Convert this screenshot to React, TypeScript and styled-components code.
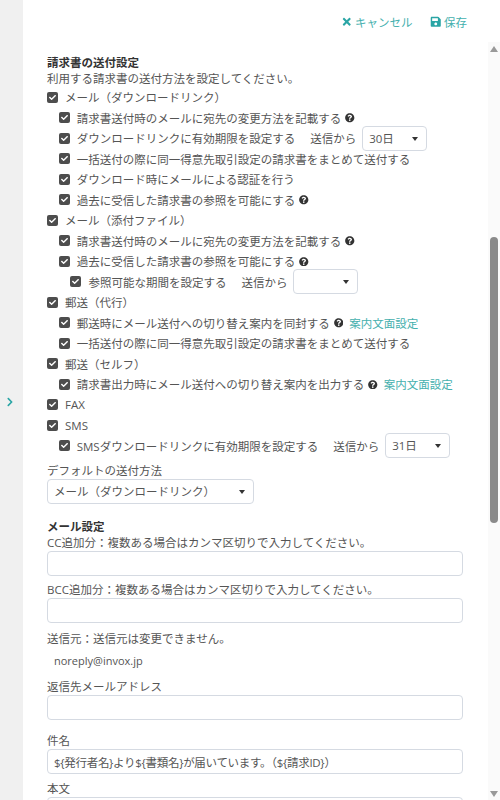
import React from 'react'
import styled, { createGlobalStyle } from 'styled-components'
import { FaCheck, FaChevronRight, FaQuestionCircle, FaSave, FaTimes } from 'react-icons/fa'

const GlobalStyle = createGlobalStyle`
    html, body {
        margin: 0;
        padding: 0;
        height: 800px;
        overflow: hidden;
        background: #fff;
    }
    * {
        box-sizing: border-box;
    }
    body, input, select, textarea {
        font-family: "Open Sans", "Noto Sans CJK JP", sans-serif;
        font-size: 11.5px;
        color: #555;
    }
`;

const Page = styled.div`
    display: flex;
    width: 500px;
    height: 800px;
    overflow: hidden;
`;

const SideBar = styled.div`
    flex: 0 0 23px;
    display: flex;
    align-items: center;
    justify-content: center;
    padding: 4px 3px 0 0;
    background-color: #f0f0f0;
    color: #2aa5a5;
    font-size: 10px;
`;

const Main = styled.div`
    flex: 1;
    min-width: 0;
    display: flex;
    flex-direction: column;
`;

const TopBar = styled.div`
    flex: 0 0 42px;
    display: flex;
    justify-content: flex-end;
    align-items: center;
    gap: 17px;
    padding: 2px 33px 0 0;
`;

const TopAction = styled.a<{ $gap: number }>`
    display: flex;
    align-items: center;
    gap: ${p => p.$gap}px;
    color: #45b0ae;
    font-size: 11.5px;
    svg {
        color: #2aa5a5;
    }
`;

const Body = styled.div`
    flex: 1;
    min-height: 0;
    display: flex;
`;

const Form = styled.div`
    flex: 1;
    min-width: 0;
    overflow: hidden;
    padding: 12px 25px 0 24px;
`;

const ScrollTrack = styled.div`
    flex: 0 0 12px;
    display: flex;
    flex-direction: column;
    align-items: center;
    background-color: #fafafa;
`;

const ScrollArrow = styled.div<{ $down?: boolean }>`
    flex: 0 0 6px;
    width: 0;
    margin-top: ${p => (p.$down ? 'auto' : '4px')};
    margin-bottom: ${p => (p.$down ? '3px' : '0')};
    border-left: 4.5px solid transparent;
    border-right: 4.5px solid transparent;
    border-bottom: ${p => (p.$down ? '0' : '6px solid #999')};
    border-top: ${p => (p.$down ? '6px solid #999' : '0')};
`;

const ScrollThumb = styled.div`
    flex: 0 0 286px;
    width: 8px;
    margin-top: 185px;
    border-radius: 4px;
    background-color: #8a8a8a;
`;

const Heading = styled.div<{ $top?: number }>`
    margin-top: ${p => p.$top || 0}px;
    font-weight: bold;
    color: #333;
    line-height: 17px;
`;

const Text = styled.div`
    line-height: 16px;
`;

const Row = styled.div<{ $level?: number }>`
    display: flex;
    align-items: center;
    height: 20.5px;
    margin-left: ${p => (p.$level || 0) * 11.7}px;
    white-space: nowrap;
`;

const Box = styled.span`
    flex: 0 0 11px;
    width: 11px;
    height: 11px;
    margin-right: 7px;
    display: flex;
    align-items: center;
    justify-content: center;
    border-radius: 2px;
    background-color: #4d4d4d;
    color: #fff;
    font-size: 7px;
`;

const Help = styled.span`
    display: inline-flex;
    margin-left: 4px;
    color: #333;
    font-size: 9.5px;
`;

const Link = styled.a`
    margin-left: 6px;
    color: #45b0ae;
`;

const After = styled.span`
    margin-left: 15px;
    margin-right: 6px;
`;

const SelectWrap = styled.span<{ $width: number }>`
    position: relative;
    display: block;
    width: ${p => p.$width}px;
    height: 25px;
    &::after {
        content: '';
        position: absolute;
        top: 11px;
        right: 9px;
        border-left: 3.5px solid transparent;
        border-right: 3.5px solid transparent;
        border-top: 4px solid #333;
    }
`;

const Select = styled.select`
    appearance: none;
    display: block;
    width: 100%;
    height: 100%;
    padding: 0 6px;
    background: #fff;
    border: 1px solid #d5dae2;
    border-radius: 4px;
`;

const Label = styled.div<{ $top?: number }>`
    margin-top: ${p => p.$top || 0}px;
    line-height: 16px;
`;

const Input = styled.input<{ $tight?: boolean }>`
    display: block;
    width: 100%;
    height: 25px;
    padding: 0 6px;
    background: #fff;
    border: 1px solid #d5dae2;
    border-radius: 4px;
    letter-spacing: ${p => (p.$tight ? '-0.3px' : '0')};
`;

const Plain = styled.div`
    padding: 0 7px;
    margin-top: 5px;
    font-size: 11px;
    line-height: 17px;
`;

const TextArea = styled.textarea`
    display: block;
    width: 100%;
    height: 120px;
    border: 1px solid #d5dae2;
    border-radius: 4px;
`;

function Check({ level, children }: { level?: number; children: React.ReactNode }) {
    return (
        <Row $level={level}>
            <Box><FaCheck /></Box>
            {children}
        </Row>
    );
}

function Period({ width, value }: { width: number; value: string }) {
    return (
        <SelectWrap $width={width}>
            <Select value={value} onChange={() => {}}>
                <option value={value}>{value}</option>
            </Select>
        </SelectWrap>
    );
}

const HelpIcon = () => <Help><FaQuestionCircle /></Help>;

export default function App() {
    return (
        <Page>
            <GlobalStyle />
            <SideBar><FaChevronRight /></SideBar>
            <Main>
                <TopBar>
                    <TopAction $gap={3}><FaTimes />キャンセル</TopAction>
                    <TopAction $gap={3}><FaSave />保存</TopAction>
                </TopBar>
                <Body>
                    <Form>
                        <Heading>請求書の送付設定</Heading>
                        <Text>利用する請求書の送付方法を設定してください。</Text>

                        <Check>メール（ダウンロードリンク）</Check>
                        <Check level={1}>請求書送付時のメールに宛先の変更方法を記載する<HelpIcon /></Check>
                        <Check level={1}>ダウンロードリンクに有効期限を設定する<After>送信から</After><Period width={65} value="30日" /></Check>
                        <Check level={1}>一括送付の際に同一得意先取引設定の請求書をまとめて送付する</Check>
                        <Check level={1}>ダウンロード時にメールによる認証を行う</Check>
                        <Check level={1}>過去に受信した請求書の参照を可能にする<HelpIcon /></Check>

                        <Check>メール（添付ファイル）</Check>
                        <Check level={1}>請求書送付時のメールに宛先の変更方法を記載する<HelpIcon /></Check>
                        <Check level={1}>過去に受信した請求書の参照を可能にする<HelpIcon /></Check>
                        <Check level={2}>参照可能な期間を設定する<After>送信から</After><Period width={65} value="" /></Check>

                        <Check>郵送（代行）</Check>
                        <Check level={1}>郵送時にメール送付への切り替え案内を同封する<HelpIcon /><Link>案内文面設定</Link></Check>
                        <Check level={1}>一括送付の際に同一得意先取引設定の請求書をまとめて送付する</Check>

                        <Check>郵送（セルフ）</Check>
                        <Check level={1}>請求書出力時にメール送付への切り替え案内を出力する<HelpIcon /><Link>案内文面設定</Link></Check>

                        <Check>FAX</Check>
                        <Check>SMS</Check>
                        <Check level={1}>SMSダウンロードリンクに有効期限を設定する<After>送信から</After><Period width={65} value="31日" /></Check>

                        <Label $top={7}>デフォルトの送付方法</Label>
                        <SelectWrap $width={207}>
                            <Select value="mail" onChange={() => {}}>
                                <option value="mail">メール（ダウンロードリンク）</option>
                            </Select>
                        </SelectWrap>

                        <Heading $top={14}>メール設定</Heading>
                        <Label>CC追加分：複数ある場合はカンマ区切りで入力してください。</Label>
                        <Input />
                        <Label $top={6}>BCC追加分：複数ある場合はカンマ区切りで入力してください。</Label>
                        <Input />
                        <Label $top={8}>送信元：送信元は変更できません。</Label>
                        <Plain>noreply@invox.jp</Plain>
                        <Label $top={10}>返信先メールアドレス</Label>
                        <Input />
                        <Label $top={13}>件名</Label>
                        <Input $tight defaultValue="${発行者名}より${書類名}が届いています。（${請求ID}）" />
                        <Label $top={7}>本文</Label>
                        <TextArea />
                    </Form>
                    <ScrollTrack>
                        <ScrollArrow />
                        <ScrollThumb />
                        <ScrollArrow $down />
                    </ScrollTrack>
                </Body>
            </Main>
        </Page>
    );
}
